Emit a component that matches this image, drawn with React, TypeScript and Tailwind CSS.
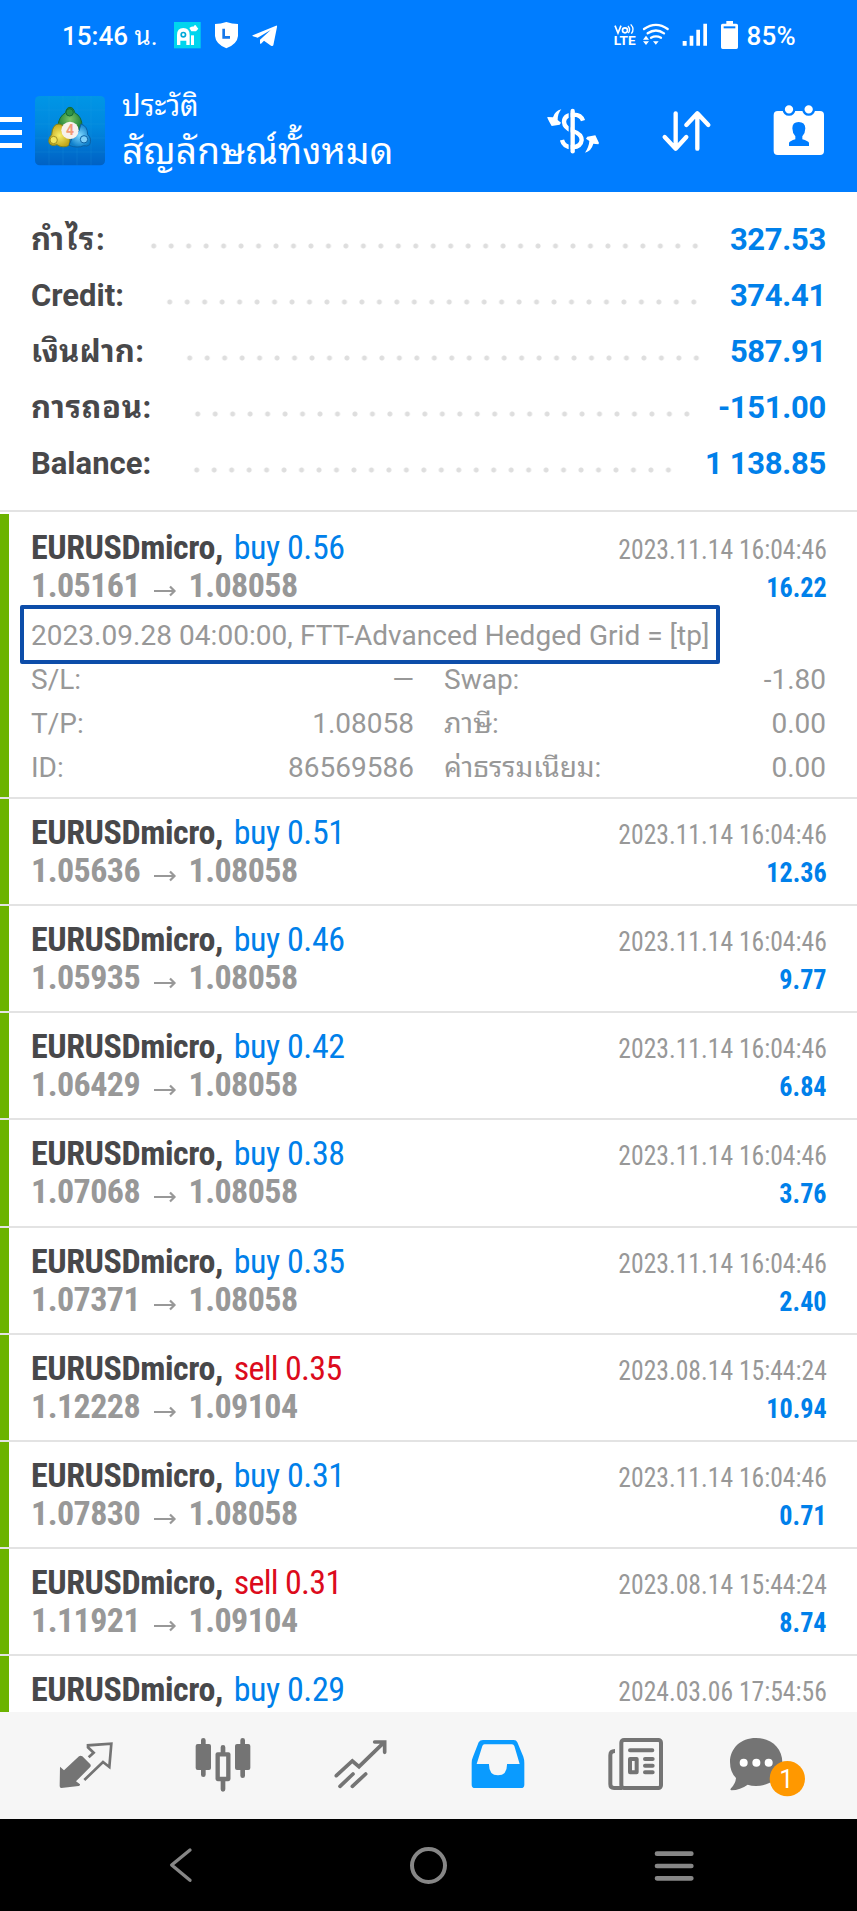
import React from "react";

const thai = "font-[Roboto,'Noto_Sans_Thai_Looped','Noto_Looped_Thai','Loma','Waree','Noto_Sans_Thai','Noto_Sans',sans-serif]";
const cond = "font-['Roboto_Condensed',Roboto,'Noto_Sans',sans-serif]";

type Summary = { label: string; value: string; dots: string; labelBox: string };

const summary: Summary[] = [
  { label: "กำไร:", value: "327.53", labelBox: "w-[114px] tracking-[1.8px]", dots: "w-[559px]" },
  { label: "Credit:", value: "374.41", labelBox: "w-[130px]", dots: "w-[541.5px]" },
  { label: "เงินฝาก:", value: "587.91", labelBox: "w-[149.5px] tracking-[0.2px]", dots: "w-[524px]" },
  { label: "การถอน:", value: "-151.00", labelBox: "w-[157.5px] tracking-[0.6px]", dots: "w-[506.6px]" },
  { label: "Balance:", value: "1 138.85", labelBox: "w-[157px]", dots: "w-[489.1px]" },
];

type Prices = { open: string; close: string; profit: string };
type Deal = { side: "buy" | "sell"; lot: string; time: string; prices?: Prices };

const deals: Deal[] = [
  { side: "buy", lot: "0.56", time: "2023.11.14 16:04:46", prices: { open: "1.05161", close: "1.08058", profit: "16.22" } },
  { side: "buy", lot: "0.51", time: "2023.11.14 16:04:46", prices: { open: "1.05636", close: "1.08058", profit: "12.36" } },
  { side: "buy", lot: "0.46", time: "2023.11.14 16:04:46", prices: { open: "1.05935", close: "1.08058", profit: "9.77" } },
  { side: "buy", lot: "0.42", time: "2023.11.14 16:04:46", prices: { open: "1.06429", close: "1.08058", profit: "6.84" } },
  { side: "buy", lot: "0.38", time: "2023.11.14 16:04:46", prices: { open: "1.07068", close: "1.08058", profit: "3.76" } },
  { side: "buy", lot: "0.35", time: "2023.11.14 16:04:46", prices: { open: "1.07371", close: "1.08058", profit: "2.40" } },
  { side: "sell", lot: "0.35", time: "2023.08.14 15:44:24", prices: { open: "1.12228", close: "1.09104", profit: "10.94" } },
  { side: "buy", lot: "0.31", time: "2023.11.14 16:04:46", prices: { open: "1.07830", close: "1.08058", profit: "0.71" } },
  { side: "sell", lot: "0.31", time: "2023.08.14 15:44:24", prices: { open: "1.11921", close: "1.09104", profit: "8.74" } },
  { side: "buy", lot: "0.29", time: "2024.03.06 17:54:56" },
];

function StatusBar() {
  return (
    <div className="flex h-[70px] items-start pt-[18px] pl-[62px] pr-[61px] text-white">
      <span className="w-[108px] text-[26px] leading-[36px] whitespace-nowrap font-medium">
        15:46 <span className="font-normal">น.</span>
      </span>
      <svg className="h-[34px] w-[35px]" viewBox="510 54 105 102">
        <rect x="522" y="66" width="80" height="79" fill="#00d5ee" />
        <path d="M531 135V105Q531 84 550 84T569 105V135H559V122H541V135Z" fill="#fff" />
        <circle cx="550" cy="104" r="9" fill="#00a9d8" />
        <circle cx="550" cy="104" r="4" fill="#fff" />
        <rect x="573" y="106" width="9" height="29" fill="#fff" />
        <path d="M568 84Q574 78 580 80Q586 70 590 80L595 86L588 94H574Z" fill="#fff" />
      </svg>
      <svg className="ml-[5px] h-[34px] w-[30px]" viewBox="630 54 90 102">
        <path d="M645 72Q662 72 679 66Q696 72 714 72V108Q712 132 679 145Q647 132 645 108Z" fill="#fff" />
        <path d="M671 86V112H690" fill="none" stroke="#1677ea" strokeWidth="8" />
      </svg>
      <svg className="ml-[10px] h-[34px] w-[30px]" viewBox="750 54 90 102">
        <path d="M758 106L828 77Q832 76 831 81L820 136Q818 140 813 137L792 122L783 131Q780 133 780 128V119L812 90L773 113L759 109Q756 108 758 106Z" fill="#fff" />
      </svg>
      <svg className="ml-auto h-[34px] w-[25px]" viewBox="555 54 75 102">
        <path d="M564 77L573 99L582 77" fill="none" stroke="#fff" strokeWidth="5" />
        <circle cx="594" cy="91" r="7.500" fill="none" stroke="#fff" strokeWidth="5" />
        <path d="M603 78Q612 89 604 99M611 73Q624 87 613 101" fill="none" stroke="#fff" strokeWidth="4" />
        <text x="560" y="136" fontFamily="Roboto" fontWeight="700" fontSize="37" textLength="66" lengthAdjust="spacingAndGlyphs" fill="#fff">LTE</text>
      </svg>
      <svg className="ml-[4px] h-[34px] w-[29px]" viewBox="642 54 87 102">
        <path d="M651 87Q687 62 722 87M662 100Q687 83 711 100M672 113Q687 105 702 113" fill="none" stroke="#fff" strokeWidth="7" strokeLinecap="round" />
        <path d="M678 124H695L686.500 134ZM648 119L657 107L666 119ZM648 124H666L657 135Z" fill="#fff" />
      </svg>
      <svg className="ml-[10px] h-[34px] w-[29px]" viewBox="759 54 87 102">
        <path d="M767 123h12v14h-12zM788 107h11v30h-11zM808 89h11v48h-11zM829 71h11v66h-11z" fill="#fff" />
      </svg>
      <svg className="ml-[10px] h-[34px] w-[22px]" viewBox="876 54 66 102">
        <path d="M898 63H918V71H928Q933 71 933 76V142Q933 147 928 147H887Q882 147 882 142V76Q882 71 887 71H898Z" fill="#fff" />
        <path d="M890 82H925" stroke="#007dff" strokeWidth="6" />
      </svg>
      <span className="ml-[5px] text-[26px] leading-[36px] font-medium tracking-[0.3px]">85%</span>
    </div>
  );
}

function AppBar() {
  return (
    <div className="flex h-[122px] items-start text-white">
      <div className="mt-[47px] flex w-[22px] flex-col gap-[8px]">
        <div className="h-[5px] bg-white" />
        <div className="h-[5px] bg-white" />
        <div className="h-[5px] bg-white" />
      </div>
      <svg className="mt-[26px] ml-[13px] h-[70px] w-[70px]" viewBox="0 0 210 210">
        <defs>
          <linearGradient id="tile" x1="0" y1="0" x2="0" y2="1">
            <stop offset="0" stopColor="#0096e6" />
            <stop offset="0.45" stopColor="#0088de" />
            <stop offset="1" stopColor="#0061c4" />
          </linearGradient>
          <radialGradient id="green"><stop offset="0" stopColor="#7cc668" /><stop offset="1" stopColor="#1f8238" /></radialGradient>
          <radialGradient id="gold"><stop offset="0" stopColor="#f7ee6a" /><stop offset="1" stopColor="#c4a81c" /></radialGradient>
          <radialGradient id="sky"><stop offset="0" stopColor="#7fd8ff" /><stop offset="1" stopColor="#0f80cc" /></radialGradient>
        </defs>
        <rect width="210" height="208" rx="14" fill="url(#tile)" />
        <path d="M42 0V208M84 0V208M126 0V208M168 0V208M0 42H210M0 84H210M0 126H210M0 168H210" stroke="#2aa5e0" strokeWidth="1.500" opacity=".35" />
        <path d="M105 34Q116 34 119 50Q142 62 141 92L126 106H84L69 92Q70 62 92 50Q94 34 105 34Z" fill="url(#green)" stroke="#156b34" strokeWidth="3" />
        <path d="M72 84Q52 84 50 116Q36 130 44 144Q52 152 66 146Q84 158 102 148L106 120L88 90Z" fill="url(#gold)" stroke="#7f8420" strokeWidth="3" />
        <path d="M138 84Q158 90 158 116Q172 128 164 146Q156 153 146 149Q128 158 102 148L112 124L132 104Z" fill="url(#sky)" stroke="#0b61a4" strokeWidth="3" />
        <circle cx="104" cy="49" r="11" fill="#2f9448" stroke="#156b34" strokeWidth="3" />
        <circle cx="56" cy="132" r="11" fill="#f2e45c" stroke="#a09022" strokeWidth="3" />
        <circle cx="147" cy="130" r="11" fill="#7fd0fa" stroke="#0b61a4" strokeWidth="3" />
        <circle cx="105" cy="103" r="26" fill="#f6f1ee" />
        <text x="105" y="118" textAnchor="middle" fontFamily="Roboto" fontWeight="700" fontSize="42" fill="#f09a78">4</text>
      </svg>
      <div className="ml-[17px] flex flex-col pt-[15px]">
        <span className="text-[29px] leading-[42px] whitespace-nowrap">ประวัติ</span>
        <span className="text-[37px] leading-[50px] tracking-[0.1px] whitespace-nowrap">สัญลักษณ์ทั้งหมด</span>
      </div>
      <svg className="mt-[30px] ml-auto h-[60px] w-[60px]" viewBox="351 300 180 180">
        <path d="M468 362Q462 344 440 344Q411 345 411 366Q412 383 437 393Q464 402 464 420Q462 440 437 442Q410 442 405 420" fill="none" stroke="#fff" strokeWidth="13" />
        <path d="M428 330V458" stroke="#007dff" strokeWidth="6" />
        <path d="M437 333V454" stroke="#fff" strokeWidth="13" strokeLinecap="round" />
        <path d="M403 328Q384 332 378 352L361 351Q360 354 374 378L398 374L402 368L392 360Q392 340 403 328ZM474 458Q493 453 499 431L514 433L516 429L505 406L481 410L477 416L487 423Q486 440 474 458Z" fill="#fff" />
      </svg>
      <svg className="mt-[30px] ml-[55px] h-[60px] w-[60px]" viewBox="696 300 180 180">
        <path d="M746 340V444M713 411L746 446L778 411M811 446V342M778 375L811 340L844 375" fill="none" stroke="#fff" strokeWidth="13" strokeLinecap="round" strokeLinejoin="round" />
      </svg>
      <svg className="mt-[30px] mr-[28px] ml-[50px] h-[60px] w-[60px]" viewBox="1026 300 180 180">
        <rect x="1040" y="333" width="151" height="132" rx="12" fill="#fff" />
        <circle cx="1086" cy="328" r="16" fill="#fff" stroke="#007dff" strokeWidth="7" />
        <circle cx="1145" cy="328" r="16" fill="#fff" stroke="#007dff" strokeWidth="7" />
        <path d="M1086 438V428Q1089 423 1105 418V409Q1096 399 1096 385Q1096 366 1115 366T1135 385Q1135 399 1126 409V418Q1143 423 1146 428V438Z" fill="#007dff" />
      </svg>
    </div>
  );
}

function Field({ name, value }: { name: string; value: string }) {
  return (
    <div className="flex h-[44px] justify-between text-[28px] leading-[44px] whitespace-nowrap">
      <span>{name}</span>
      <span>{value}</span>
    </div>
  );
}

function DealRow({ deal, open }: { deal: Deal; open: boolean }) {
  return (
    <div className={open ? "flex h-[285px] shrink-0 border-b-2 border-[#e3e3e3]" : "flex h-[107.15px] shrink-0 border-b-2 border-[#e3e3e3]"}>
      <div className="w-[9px] shrink-0 bg-[#6cb300]" />
      <div className="min-w-0 flex-1 pt-[14px]">
        <div className={`${cond} flex h-[38px] items-baseline justify-between pr-[30px] pl-[22px] leading-[38px] whitespace-nowrap`}>
          <span className="text-[34px] tracking-[-0.45px]">
            <b className="mr-[3.5px] text-[#48484a]">EURUSDmicro,</b>{" "}
            <span className={deal.side === "buy" ? "text-[#0080ea]" : "tracking-[-0.7px] text-[#dc0b1c]"}>
              {deal.side} {deal.lot}
            </span>
          </span>
          <span className="inline-block origin-right scale-x-[0.915] text-[28px] text-[#989898]">{deal.time}</span>
        </div>
        {deal.prices && (
          <div className={`${cond} flex h-[38px] items-baseline justify-between pr-[30px] pl-[22px] leading-[38px] font-bold whitespace-nowrap`}>
            <span className="flex items-baseline text-[34px] tracking-[-0.55px] text-[#989898]">
              <span className="w-[122.5px]">{deal.prices.open}</span>
              <svg className="mr-[12px] h-[12px] w-[23px]" viewBox="0 0 23 12">
                <path d="M0 6H20.500M16 1.500L20.500 6L16 10.500" fill="none" stroke="#989898" strokeWidth="2.200" />
              </svg>
              <span>{deal.prices.close}</span>
            </span>
            <span className="inline-block origin-right scale-x-[0.935] text-[28px] text-[#0080ea]">{deal.prices.profit}</span>
          </div>
        )}
        {open && (
          <div className={`${thai} pt-px text-[#989898]`}>
            <div className="ml-[11px] h-[59px] w-[700px] rounded-[2px] border-4 border-[#0d4da9] pt-[5px] pl-[7px] text-[28px] leading-[44px] tracking-[0.04px] whitespace-nowrap">
              2023.09.28 04:00:00, FTT-Advanced Hedged Grid = [tp]
            </div>
            <div className="-mt-[6px] grid grid-cols-[383px_382px] gap-x-[30px] pl-[22px]">
              <Field name="S/L:" value="—" />
              <Field name="Swap:" value="-1.80" />
              <Field name="T/P:" value="1.08058" />
              <Field name="ภาษี:" value="0.00" />
              <Field name="ID:" value="86569586" />
              <Field name="ค่าธรรมเนียม:" value="0.00" />
            </div>
          </div>
        )}
      </div>
    </div>
  );
}

function TabBar() {
  return (
    <div className="flex h-[107px] shrink-0 bg-[#f6f6f6] pl-[17px]">
      <svg className="h-[107px] w-[137px]" viewBox="51 216 411 321">
        <path d="M180 380L192 391L237 349Q242 345 247 349L271 373Q274 378 270 382L228 424L240 433Q241 437 236 438L184 444Q179 444 179 438Z" fill="#747474" />
        <path d="M266 352L281 338L264 322L264 316L334 311L328 381L309 366L253 420" fill="none" stroke="#747474" strokeWidth="8" />
      </svg>
      <svg className="h-[107px] w-[137px]" viewBox="462 216 411 321">
        <g stroke="#747474" fill="#747474">
          <path d="M610 301V404M669 322V448M728 301V407" strokeWidth="14" strokeLinecap="round" />
          <rect x="587" y="312" width="46" height="78" rx="6" stroke="none" />
          <rect x="705" y="312" width="46" height="78" rx="6" stroke="none" />
          <rect x="653" y="343" width="32" height="74" fill="#f6f6f6" strokeWidth="13" strokeLinejoin="round" />
        </g>
      </svg>
      <svg className="h-[107px] w-[137px]" viewBox="873 216 411 321">
        <path d="M1009 407L1057 363L1077 380L1152 307M1124 306H1154V337M1020 439L1059 402M1057 439L1097 402" fill="none" stroke="#747474" strokeWidth="11" strokeLinecap="round" />
      </svg>
      <svg className="h-[107px] w-[137px]" viewBox="3 216 411 321">
        <path d="M168 300H260Q268 300 271 307L289 350Q292 358 292 370V434Q292 444 282 444H144Q134 444 134 434V370Q134 358 138 350L155 307Q159 300 168 300Z" fill="#0a9bff" />
        <path d="M172 313H255Q260 313 262 318L278 372H240Q241 406 213 406Q185 406 186 372H149L166 318Q168 313 172 313Z" fill="#f6f6f6" />
      </svg>
      <svg className="h-[107px] w-[137px]" viewBox="414 216 411 321">
        <g fill="none" stroke="#747474" strokeWidth="12">
          <rect x="583" y="300" width="119" height="144" rx="8" />
          <path d="M564 333Q550 333 550 346V433Q550 444 561 444H585" />
          <path d="M609 331H676M654 357H677M654 377H677M654 397H677" strokeLinecap="round" />
          <rect x="609" y="357" width="20" height="40" strokeLinejoin="round" />
        </g>
      </svg>
      <svg className="h-[107px] w-[137px]" viewBox="825 216 411 321">
        <path d="M987 294C1033 294 1066 325 1066 366S1033 438 987 438Q973 438 962 434Q940 450 913 451Q908 450 912 445Q926 430 927 414Q909 396 909 366C909 325 941 294 987 294Z" fill="#747474" />
        <path d="M950 368h.1M988 368h.1M1025 368h.1" stroke="#fff" strokeWidth="24" strokeLinecap="round" />
        <circle cx="1081" cy="416" r="53" fill="#ff9800" />
        <text x="1078" y="443" textAnchor="middle" fontFamily="Roboto" fontSize="76" fill="#fff">1</text>
      </svg>
    </div>
  );
}

function SystemBar() {
  return (
    <div className="flex h-[92px] shrink-0 items-center justify-between bg-black pr-[153px] pl-[150px]">
      <svg className="h-[60px] w-[60px]" viewBox="450 585 180 180">
        <path d="M570 630L515 675L570 721" fill="none" stroke="#868686" strokeWidth="10" strokeLinecap="round" strokeLinejoin="round" />
      </svg>
      <svg className="h-[60px] w-[60px]" viewBox="0 0 60 60">
        <circle cx="31.500" cy="30.500" r="16.500" fill="none" stroke="#868686" strokeWidth="4" />
      </svg>
      <svg className="h-[60px] w-[60px]" viewBox="653 585 180 180">
        <path d="M692 641H795M692 678H795M692 715H795" stroke="#868686" strokeWidth="14" strokeLinecap="round" />
      </svg>
    </div>
  );
}

export default function App() {
  return (
    <div className={`${thai} flex h-[1911px] w-full flex-col overflow-hidden bg-white`}>
      <header className="h-[192px] shrink-0 bg-[#007dff]">
        <StatusBar />
        <AppBar />
      </header>
      <section className="h-[320px] shrink-0 border-b-2 border-[#e3e3e3] pt-[20px] pr-[31px] pl-[31px]">
        {summary.map((s) => (
          <div key={s.label} className="flex h-[56px] items-center text-[31px] leading-[56px] font-bold whitespace-nowrap">
            <span className={`${s.labelBox} text-[#48484a]`}>{s.label}</span>
            <span className={`${s.dots} mt-[11px] h-[6px] bg-[radial-gradient(circle,#dedede_2px,transparent_3px)] bg-[length:17.47px_6px] bg-repeat-x`} />
            <span className="ml-auto tracking-[-0.3px] text-[#0080ea]">{s.value}</span>
          </div>
        ))}
      </section>
      <main className="flex min-h-0 flex-1 flex-col overflow-hidden pt-[2px]">
        {deals.map((d, i) => (
          <DealRow key={i} deal={d} open={i === 0} />
        ))}
      </main>
      <TabBar />
      <SystemBar />
    </div>
  );
}
